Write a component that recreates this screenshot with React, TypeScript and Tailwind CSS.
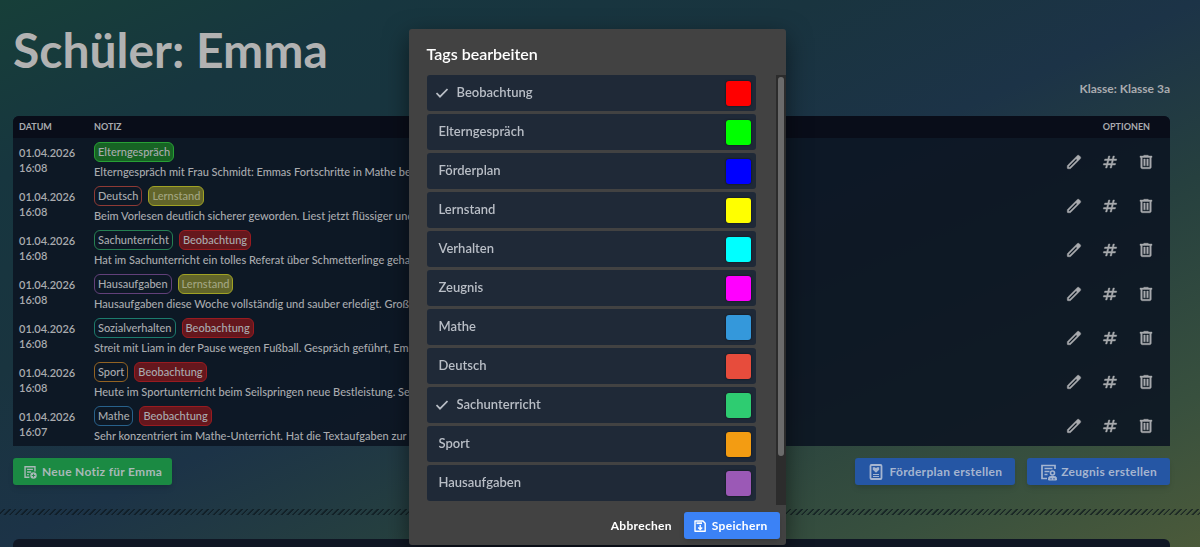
import React, { useState } from "react";

type Tag = { name: string; style: string };
type Note = { time: string; tags: Tag[]; text: string };

const observation: Tag = { name: "Beobachtung", style: "border-[#991b20] bg-[#65171d]" };
const level: Tag = { name: "Lernstand", style: "border-[#a0a224] bg-[#62652a] text-[#a3a582]" };

const notes: Note[] = [
  {
    time: "16:08",
    tags: [{ name: "Elterngespräch", style: "border-[#28a035] bg-[#176324]" }],
    text: "Elterngespräch mit Frau Schmidt: Emmas Fortschritte in Mathe besprochen.",
  },
  {
    time: "16:08",
    tags: [{ name: "Deutsch", style: "border-[#8f3a35]" }, level],
    text: "Beim Vorlesen deutlich sicherer geworden. Liest jetzt flüssiger und betonter.",
  },
  {
    time: "16:08",
    tags: [{ name: "Sachunterricht", style: "border-[#258052]" }, observation],
    text: "Hat im Sachunterricht ein tolles Referat über Schmetterlinge gehalten.",
  },
  {
    time: "16:08",
    tags: [{ name: "Hausaufgaben", style: "border-[#62407a]" }, level],
    text: "Hausaufgaben diese Woche vollständig und sauber erledigt. Große Verbesserung.",
  },
  {
    time: "16:08",
    tags: [{ name: "Sozialverhalten", style: "border-[#1c7a6c]" }, observation],
    text: "Streit mit Liam in der Pause wegen Fußball. Gespräch geführt, Emma war einsichtig.",
  },
  {
    time: "16:08",
    tags: [{ name: "Sport", style: "border-[#936323]" }, observation],
    text: "Heute im Sportunterricht beim Seilspringen neue Bestleistung. Sehr motiviert.",
  },
  {
    time: "16:07",
    tags: [{ name: "Mathe", style: "border-[#28618b]" }, observation],
    text: "Sehr konzentriert im Mathe-Unterricht. Hat die Textaufgaben zur Division gelöst.",
  },
];

const tagOptions = [
  { name: "Beobachtung", color: "bg-[#ff0000]" },
  { name: "Elterngespräch", color: "bg-[#00ff00]" },
  { name: "Förderplan", color: "bg-[#0000ff]" },
  { name: "Lernstand", color: "bg-[#ffff00]" },
  { name: "Verhalten", color: "bg-[#00ffff]" },
  { name: "Zeugnis", color: "bg-[#ff00ff]" },
  { name: "Mathe", color: "bg-[#3498db]" },
  { name: "Deutsch", color: "bg-[#e74c3c]" },
  { name: "Sachunterricht", color: "bg-[#2ecc71]" },
  { name: "Sport", color: "bg-[#f39c12]" },
  { name: "Hausaufgaben", color: "bg-[#9b59b6]" },
];

const editPath =
  "M200-200h57l391-391-57-57-391 391v57Zm-40 80q-17 0-28.500-11.500T120-160v-97q0-16 6-30.500t17-25.500l505-504q12-11 26.500-17t30.500-6q16 0 31 6t26 18l55 56q12 11 17.500 26t5.500 30q0 16-5.500 30.500T817-647L313-143q-11 11-25.500 17t-30.500 6h-97Z";
const hashPath =
  "m240-160 40-160H120l20-80h160l40-160H180l20-80h160l40-160h80l-40 160h160l40-160h80l-40 160h160l-20 80H660l-40 160h160l-20 80H600l-40 160h-80l40-160H360l-40 160h-80Zm140-240h160l40-160H420l-40 160Z";
const deletePath =
  "M280-120q-33 0-56.500-23.500T200-200v-520h-40v-80h200v-40h240v40h200v80h-40v520q0 33-23.500 56.500T680-120H280Zm400-600H280v520h400v-520ZM360-280h80v-360h-80v360Zm160 0h80v-360h-80v360Z";

function IconButton({ label, path }: { label: string; path: string }) {
  return (
    <button type="button" aria-label={label} className="flex size-9 items-center justify-center">
      <svg viewBox="0 -960 960 960" className="size-[18px] fill-current stroke-current" strokeWidth="22" aria-hidden="true">
        <path d={path} />
      </svg>
    </button>
  );
}

function NoteAddIcon() {
  return (
    <svg viewBox="0 0 24 24" className="size-[14px]" fill="none" stroke="currentColor" strokeWidth="2.400" aria-hidden="true">
      <path d="M11 21H3.500V3H20.500V11M7 7.500H17M7 12H14M7 16.500H10" />
      <circle cx="18" cy="18" r="5.500" fill="currentColor" stroke="none" />
      <path d="M18 15v6M15 18h6" stroke="#1b8a43" strokeWidth="1.500" />
    </svg>
  );
}

function PlanIcon() {
  return (
    <svg viewBox="0 0 16 18" className="h-[18px] w-4" fill="none" stroke="currentColor" aria-hidden="true">
      <rect x="2.500" y="2" width="11" height="14" rx="1" strokeWidth="1.800" />
      <path d="M8 9.800 4.800 6.700V4.200h2.200l1 1 1-1h2.200v2.500Z" fill="currentColor" stroke="none" />
      <path d="M5 11.500h6M5 13.500h6" strokeWidth="1.200" />
    </svg>
  );
}

function ReportIcon() {
  return (
    <svg viewBox="0 0 18 18" className="size-[18px]" fill="none" stroke="currentColor" aria-hidden="true">
      <path d="M7 15.500H2V2.500H15V6" strokeWidth="1.700" />
      <path d="M4.500 5.500h8M4.500 8.500h5M4.500 11.500h3" strokeWidth="1.500" />
      <circle cx="12.500" cy="10" r="2" strokeWidth="1.600" />
      <path d="M8.500 17v-1.500q0-2 2-2h4q2 0 2 2V17Z" fill="currentColor" />
      <path d="M11 15v1.500M14 15v1.500" stroke="#2556a4" />
    </svg>
  );
}

function SaveIcon() {
  return (
    <svg viewBox="0 0 12 12" className="size-3" fill="none" stroke="currentColor" strokeWidth="1.400" aria-hidden="true">
      <path d="M1 1H9L11.200 3.200V11.200H1Z" strokeLinejoin="round" />
      <path d="M2.500 3.200H8" strokeWidth="1.800" />
      <path d="M6.200 5v4.500M4.200 7.500 6.200 9.500 8.200 7.500" />
    </svg>
  );
}

export default function App() {
  const [selected, setSelected] = useState(["Beobachtung", "Sachunterricht"]);
  const toggle = (name: string) =>
    setSelected((now) => (now.includes(name) ? now.filter((n) => n !== name) : [...now, name]));

  return (
    <div className="relative h-screen overflow-hidden bg-[linear-gradient(to_bottom_right,#173f39_0%,#17363f_16%,#19343f_34%,#1c3347_50%,#26403f_66%,#38503e_86%,#4b5a3a_100%)] font-['Lato','Noto_Sans',sans-serif] text-[#a9abaf]">
      <main className="flex flex-col pr-[30px] pl-[13px]">
        <h1 className="pt-5 text-[48px] leading-[60px] font-bold text-[#b2b2b2]">Schüler: Emma</h1>
        <p className="self-end text-[12px] leading-[18px] font-bold">Klasse: Klasse 3a</p>

        <div className="mt-[18px] overflow-hidden rounded-t-md bg-[#0c1522]/90">
          <table className="w-full table-fixed text-left text-[11px]">
            <thead className="bg-[#090d19] text-[9px] leading-[22px]">
              <tr>
                <th className="w-[81px] pl-[6px] font-bold">DATUM</th>
                <th className="font-bold">NOTIZ</th>
                <th className="w-[140px] pr-[20px] text-right font-bold">OPTIONEN</th>
              </tr>
            </thead>
            <tbody>
              {notes.map((note) => (
                <tr key={note.text} className="h-11">
                  <td className="pl-[6px] align-middle leading-[15px] font-semibold">
                    01.04.2026
                    <br />
                    {note.time}
                  </td>
                  <td className="pt-1 align-middle">
                    <div className="flex gap-[6px]">
                      {note.tags.map((tag) => (
                        <span key={tag.name} className={`rounded-md border px-[3px] leading-[18px] font-medium ${tag.style}`}>
                          {tag.name}
                        </span>
                      ))}
                    </div>
                    <p className="truncate leading-5 font-medium">{note.text}</p>
                  </td>
                  <td className="pt-1 pr-[6px] align-middle">
                    <div className="flex justify-end">
                      <IconButton label="Bearbeiten" path={editPath} />
                      <IconButton label="Tags bearbeiten" path={hashPath} />
                      <IconButton label="Löschen" path={deletePath} />
                    </div>
                  </td>
                </tr>
              ))}
            </tbody>
          </table>
        </div>

        <div className="mt-3 flex gap-3 text-[12px] font-bold tracking-wide text-[#a9b9b8]">
          <button type="button" className="mr-auto flex h-[27px] items-center gap-[5px] rounded-[3px] bg-[#1b8a43] px-[10px] shadow-md">
            <NoteAddIcon />
            Neue Notiz für Emma
          </button>
          <button type="button" className="flex h-[27px] items-center gap-[5px] rounded-[3px] bg-[#2556a4] px-[13px] text-[#a5b5d0] shadow-md">
            <PlanIcon />
            Förderplan erstellen
          </button>
          <button type="button" className="flex h-[27px] items-center gap-[3px] rounded-[3px] bg-[#2556a4] px-[13px] text-[#a5b5d0] shadow-md">
            <ReportIcon />
            Zeugnis erstellen
          </button>
        </div>
      </main>

      <div className="mt-6 h-[6px] bg-[repeating-linear-gradient(135deg,transparent_0px,transparent_2px,#0b151bb0_3px,#0b151bb0_4px)]" />
      <section className="mt-6 mr-[30px] ml-[13px] h-20 rounded-t-md bg-[#101724]" />

      <div className="fixed inset-0 flex items-start justify-center pt-[29px] pr-[6px]">
        <form
          role="dialog"
          aria-label="Tags bearbeiten"
          onSubmit={(event) => event.preventDefault()}
          className="flex w-[377px] flex-col rounded-[3px] bg-[#424242] shadow-[0_8px_24px_rgba(0,0,0,0.5)]"
        >
          <h2 className="px-[18px] pt-[14px] pb-[10px] text-[16px] leading-[22px] font-semibold text-white">Tags bearbeiten</h2>
          <div className="flex h-[430px]">
            <div className="flex flex-1 flex-col gap-[3px] overflow-hidden pr-5 pl-[18px]">
              {tagOptions.map((tag) => {
                const checked = selected.includes(tag.name);
                return (
                  <label
                    key={tag.name}
                    className="flex h-9 shrink-0 items-center rounded-[3px] bg-[#1f2937] pr-[5px] pl-3 text-[13px] font-semibold text-[#b9bec6]"
                  >
                    <input type="checkbox" className="sr-only" checked={checked} onChange={() => toggle(tag.name)} />
                    {checked && (
                      <svg viewBox="0 0 12 10" className="-ml-[3px] mr-[9px] h-[10px] w-3" fill="none" stroke="currentColor" strokeWidth="1.700" aria-hidden="true">
                        <path d="M.5 5 4 8.700 11.500 1" />
                      </svg>
                    )}
                    <span className="flex-1">{tag.name}</span>
                    <span className={`size-[25px] rounded-[3px] shadow-[0_0_2px_rgba(0,0,0,0.7)] ${tag.color}`} />
                  </label>
                );
              })}
            </div>
            <div className="w-[10px] bg-[#2c2c2c] p-[2px]">
              <div className="h-[379px] rounded-full bg-[#6b6b6b]" />
            </div>
          </div>
          <div className="flex justify-end gap-3 pt-[7px] pr-[6px] pb-[6px] text-[12px] font-bold tracking-wide text-white">
            <button type="button">Abbrechen</button>
            <button type="submit" className="flex h-[27px] items-center gap-[6px] rounded-[3px] bg-[#3b82f6] pr-3 pl-[10px] shadow-md">
              <SaveIcon />
              Speichern
            </button>
          </div>
        </form>
      </div>
    </div>
  );
}
